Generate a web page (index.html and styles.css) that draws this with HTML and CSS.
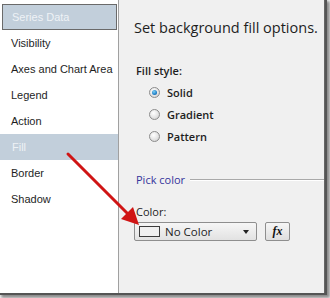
FILE: index.html
```html
<!DOCTYPE html>
<html lang="en">
<head>
    <meta charset="UTF-8" />
    <title>Fill Properties</title>
    <link rel="stylesheet" href="styles.css">
</head>
<body>
    <div class="dialog">
        <ul class="nav-list">
            <li class="nav-item focused">Series Data</li>
            <li class="nav-item">Visibility</li>
            <li class="nav-item">Axes and Chart Area</li>
            <li class="nav-item">Legend</li>
            <li class="nav-item">Action</li>
            <li class="nav-item selected">Fill</li>
            <li class="nav-item">Border</li>
            <li class="nav-item">Shadow</li>
        </ul>
        <div class="panel">
            <h1 class="panel-title">Set background fill options.</h1>
            <div class="field-label">Fill style:</div>
            <div class="radio-group">
                <label class="radio-row"><span class="radio checked"></span>Solid</label>
                <label class="radio-row"><span class="radio"></span>Gradient</label>
                <label class="radio-row"><span class="radio"></span>Pattern</label>
            </div>
            <div class="group-header">
                <span>Pick color</span>
                <span class="group-line"></span>
            </div>
            <div class="field-label color-label">Color:</div>
            <div class="color-row">
                <div class="color-select">
                    <span class="swatch"></span>
                    <span class="color-name">No Color</span>
                    <span class="caret"></span>
                </div>
                <button class="fx-button">fx</button>
            </div>
        </div>
    </div>

    <svg class="callout-arrow" width="330" height="298" viewBox="0 0 330 298">
        <line x1="68" y1="154" x2="128" y2="214" stroke="#d01414" stroke-width="3" stroke-linecap="round" />
        <polygon points="139,225 121,219 133,207" fill="#d01414" />
    </svg>
</body>
</html>
```

FILE: styles.css
```css
html, body {
    margin: 0;
    padding: 0;
    background: #ffffff;
}
body {
    width: 330px;
    height: 298px;
    overflow: hidden;
    position: relative;
    font-family: "Liberation Sans", Arial, sans-serif;
}
.dialog {
    display: flex;
    width: 325px;
    height: 293px;
    box-shadow: 1px 1px 0 1px #555555, 3px 3px 3px 2px #8a8a8a;
}
.nav-list {
    list-style: none;
    margin: 0;
    padding: 4px 0 0 0;
    width: 119px;
    background: #ffffff;
    border-right: 1px solid #a0a0a0;
    box-sizing: border-box;
}
.nav-item {
    height: 26px;
    line-height: 26px;
    padding-left: 11px;
    font-size: 11px;
    white-space: nowrap;
    color: #1e1e1e;
}
.nav-item.focused {
    margin: 0 1px 0 2px;
    padding-left: 9px;
    height: 26px;
    line-height: 24px;
    box-sizing: border-box;
    background: #c2cfdb;
    border: 1px solid #6a6a6a;
    color: #eef2f6;
}
.nav-item.selected {
    background: #c2cfdb;
    color: #eef2f6;
    padding-left: 12px;
}
.panel {
    flex: 1;
    background: #f0f0f0;
    padding-left: 15px;
    border-right: 1px solid #666666;
    font-family: "Open Sans", "Liberation Sans", sans-serif;
    color: #1e1e1e;
}
.panel-title {
    margin: 18px 0 0 0;
    font-size: 14.5px;
    font-weight: normal;
    line-height: 20px;
    color: #1e1e1e;
}
.field-label {
    margin: 25px 0 0 2px;
    font-size: 11px;
    font-weight: 600;
    line-height: 16px;
}
.radio-group {
    display: flex;
    flex-direction: column;
    gap: 6px;
    margin: 5px 0 0 15px;
}
.radio-row {
    display: flex;
    align-items: center;
    gap: 7px;
    height: 16px;
    font-size: 11px;
    font-weight: 600;
}
.radio {
    width: 11px;
    height: 11px;
    border-radius: 50%;
    border: 1px solid #8c8c8c;
    background: radial-gradient(circle at 40% 35%, #ffffff 0, #e4e4e4 55%, #c8c8c8 100%);
    box-sizing: border-box;
    position: relative;
}
.radio.checked::after {
    content: "";
    position: absolute;
    left: 2px;
    top: 2px;
    width: 5px;
    height: 5px;
    border-radius: 50%;
    background: radial-gradient(circle at 40% 35%, #7fd0f5 0, #1e80c8 60%, #0f4f90 100%);
}
.group-header {
    display: flex;
    align-items: center;
    gap: 5px;
    margin: 28px 0 0 2px;
    font-size: 11px;
    color: #34349c;
}
.group-line {
    flex: 1;
    height: 0;
    border-top: 1px solid #a9a9a9;
    border-bottom: 1px solid #ffffff;
}
.color-label {
    margin-top: 17px;
    font-weight: normal;
}
.color-row {
    display: flex;
    align-items: center;
    gap: 8px;
    margin-top: 2px;
}
.color-select {
    display: flex;
    align-items: center;
    width: 123px;
    height: 19px;
    box-sizing: border-box;
    border: 1px solid #8e8e8e;
    border-radius: 2px;
    background: linear-gradient(#f6f6f6, #e2e2e2);
    padding-left: 4px;
}
.swatch {
    width: 21px;
    height: 11px;
    border: 1px solid #3c3c3c;
    background: #f0f0f0;
    box-sizing: border-box;
}
.color-name {
    flex: 1;
    margin-left: 5px;
    font-size: 11.5px;
    color: #1e1e1e;
}
.caret {
    width: 0;
    height: 0;
    margin-right: 7px;
    border-left: 3.5px solid transparent;
    border-right: 3.5px solid transparent;
    border-top: 4px solid #222222;
}
.fx-button {
    width: 25px;
    height: 19px;
    padding: 0;
    border: 1px solid #8e8e8e;
    border-radius: 2px;
    background: linear-gradient(#f6f6f6, #dedede);
    font-family: "Liberation Serif", serif;
    font-style: italic;
    font-weight: bold;
    font-size: 12px;
    color: #111111;
}
.callout-arrow {
    position: absolute;
    left: 0;
    top: 0;
    pointer-events: none;
}
```
